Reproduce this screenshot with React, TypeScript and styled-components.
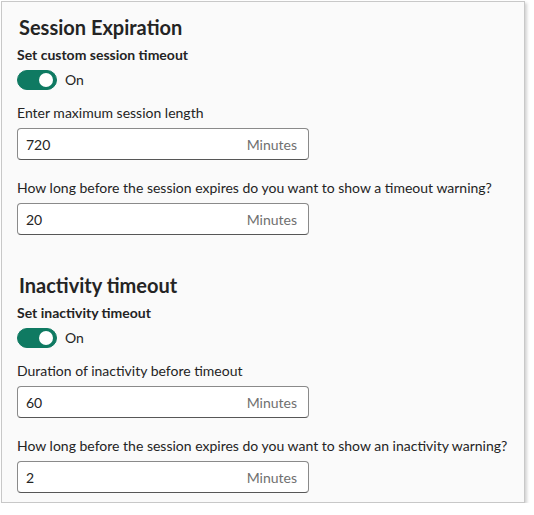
import React from "react";
import styled, { createGlobalStyle } from "styled-components";

const GlobalStyle = createGlobalStyle`
  html, body {
    margin: 0;
    padding: 0;
    background: #ffffff;
  }
  body {
    font-family: Lato, "Noto Sans", Arial, sans-serif;
    color: #242424;
  }
`;

const Panel = styled.div`
  box-sizing: border-box;
  margin: 1px 0 0 1px;
  width: 524px;
  height: 502px;
  border: 1px solid #c8c8c8;
  background: #fafafa;
  box-shadow: 2px 2px 3px rgba(0, 0, 0, 0.18);
  padding: 11px 15px 0 15px;
  display: flex;
  flex-direction: column;
`;

const Section = styled.section`
  display: flex;
  flex-direction: column;
  & + & {
    margin-top: 36px;
  }
`;

const Heading = styled.h2`
  margin: 0 0 4px 2px;
  font-size: 20px;
  line-height: 28px;
  font-weight: 700;
  color: #242424;
`;

const SubLabel = styled.div`
  font-size: 14px;
  line-height: 20px;
  font-weight: 700;
`;

const ToggleRow = styled.label`
  display: flex;
  align-items: center;
  gap: 8px;
  margin-top: 5px;
  font-size: 14px;
  line-height: 20px;
`;

const Track = styled.span<{ $on: boolean }>`
  position: relative;
  box-sizing: border-box;
  width: 40px;
  height: 20px;
  border-radius: 10px;
  background: ${(p) => (p.$on ? "#0f7a62" : "#ffffff")};
  border: 1px solid ${(p) => (p.$on ? "#0f7a62" : "#616161")};
`;

const Thumb = styled.span<{ $on: boolean }>`
  position: absolute;
  top: 2px;
  left: ${(p) => (p.$on ? "21px" : "3px")};
  width: 14px;
  height: 14px;
  border-radius: 50%;
  background: ${(p) => (p.$on ? "#ffffff" : "#616161")};
`;

const Field = styled.div`
  display: flex;
  flex-direction: column;
  margin-top: 13px;
  & + & {
    margin-top: 18px;
  }
`;

const FieldLabel = styled.div`
  font-size: 14px;
  line-height: 20px;
  margin-bottom: 5px;
  white-space: nowrap;
`;

const InputBox = styled.div`
  box-sizing: border-box;
  display: flex;
  align-items: center;
  width: 292px;
  height: 32px;
  border: 1px solid #8a8a8a;
  border-bottom-color: #575757;
  border-radius: 4px;
  background: #ffffff;
  padding: 0 11px 0 8px;
`;

const Value = styled.span`
  flex: 1;
  font-size: 14px;
  color: #242424;
`;

const Unit = styled.span`
  font-size: 14px;
  color: #707070;
`;

type FieldDef = { label: string; value: string };

const Toggle = ({ on }: { on: boolean }) => (
  <ToggleRow>
    <Track $on={on}>
      <Thumb $on={on} />
    </Track>
    {on ? "On" : "Off"}
  </ToggleRow>
);

const NumberField = ({ label, value }: FieldDef) => (
  <Field>
    <FieldLabel>{label}</FieldLabel>
    <InputBox>
      <Value>{value}</Value>
      <Unit>Minutes</Unit>
    </InputBox>
  </Field>
);

const sections = [
  {
    title: "Session Expiration",
    switchLabel: "Set custom session timeout",
    fields: [
      { label: "Enter maximum session length", value: "720" },
      {
        label:
          "How long before the session expires do you want to show a timeout warning?",
        value: "20",
      },
    ],
  },
  {
    title: "Inactivity timeout",
    switchLabel: "Set inactivity timeout",
    fields: [
      { label: "Duration of inactivity before timeout", value: "60" },
      {
        label:
          "How long before the session expires do you want to show an inactivity warning?",
        value: "2",
      },
    ],
  },
];

const App = () => (
  <>
    <GlobalStyle />
    <Panel>
      {sections.map((s) => (
        <Section key={s.title}>
          <Heading>{s.title}</Heading>
          <SubLabel>{s.switchLabel}</SubLabel>
          <Toggle on />
          {s.fields.map((f) => (
            <NumberField key={f.label} {...f} />
          ))}
        </Section>
      ))}
    </Panel>
  </>
);

export default App;
